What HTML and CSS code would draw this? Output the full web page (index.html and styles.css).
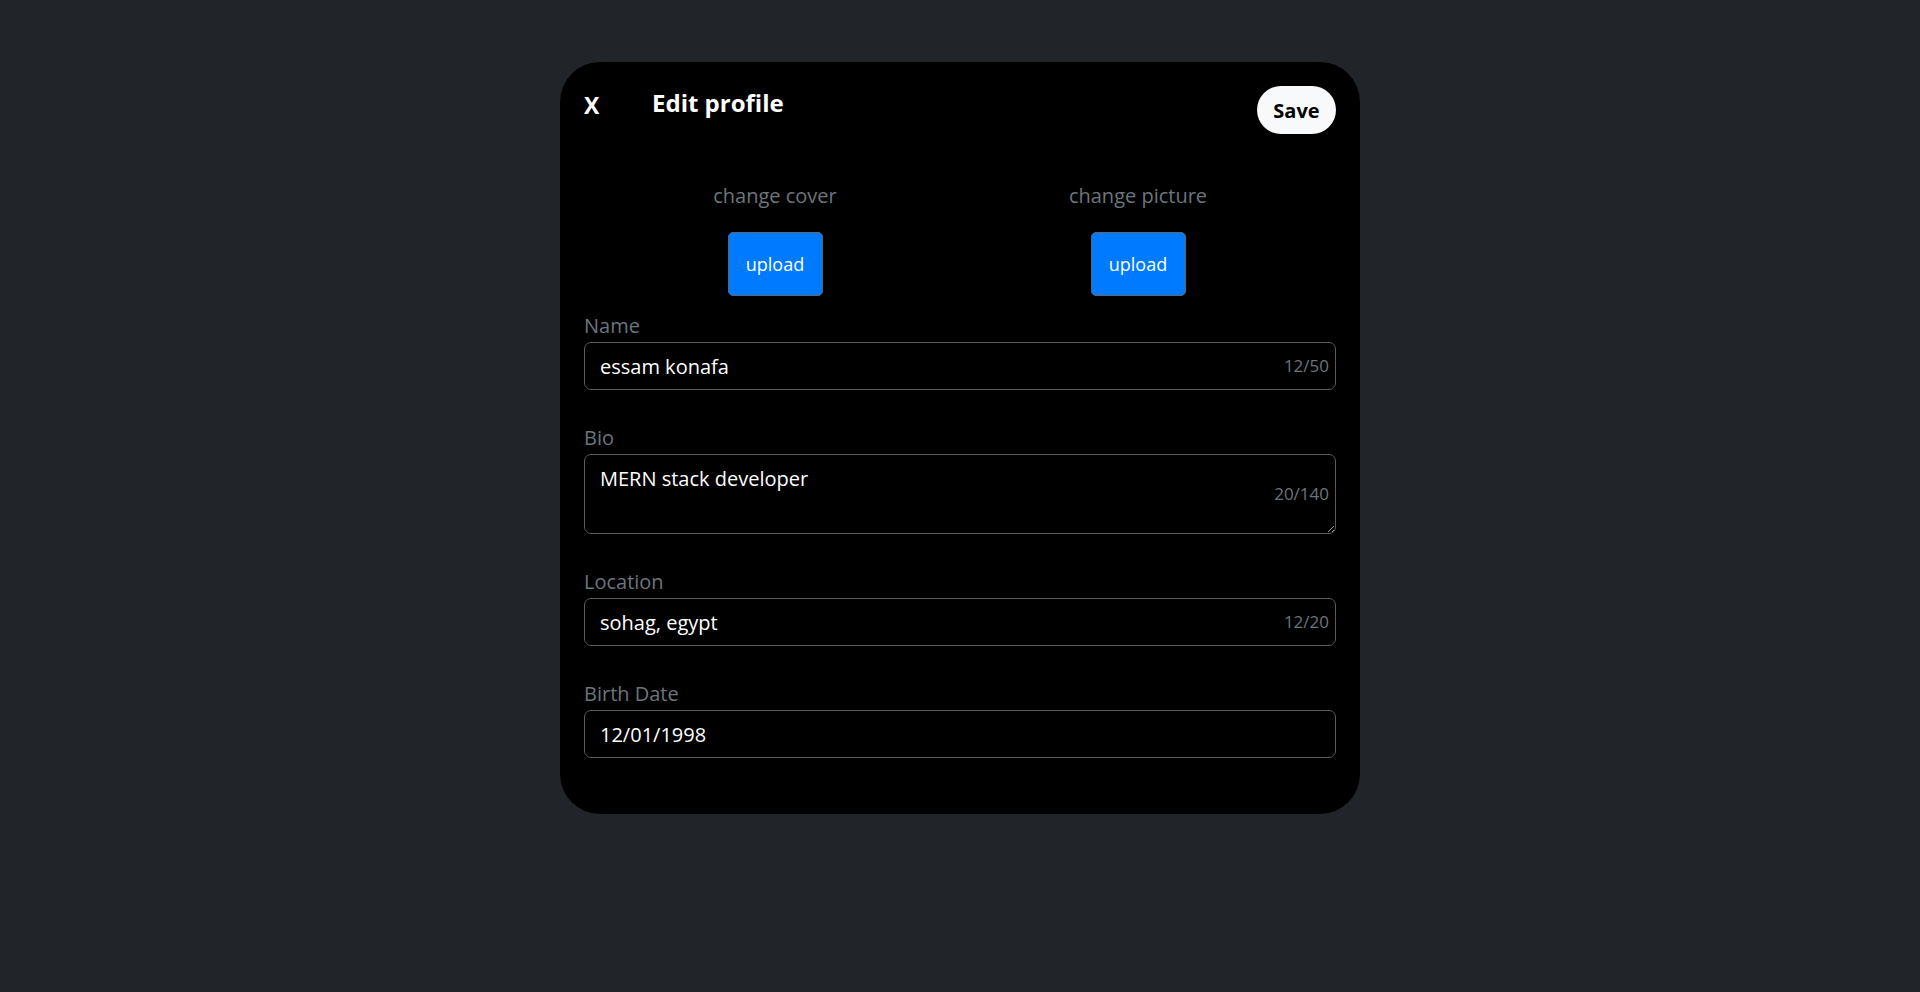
FILE: index.html
```html
<!DOCTYPE html>
<html lang="en">
<head>
<meta charset="utf-8">
<title>Edit profile</title>
<link rel="stylesheet" href="styles.css">
</head>
<body>
<div class="modal">
  <div class="modal-header">
    <button class="close-btn" type="button">X</button>
    <h3 class="title">Edit profile</h3>
    <button class="save-btn" type="button">Save</button>
  </div>
  <div class="uploads">
    <div class="upload-col">
      <p class="upload-label">change cover</p>
      <button class="upload-btn" type="button">upload</button>
    </div>
    <div class="upload-col">
      <p class="upload-label">change picture</p>
      <button class="upload-btn" type="button">upload</button>
    </div>
  </div>
  <form class="fields">
    <div class="field">
      <label class="field-label">Name</label>
      <div class="control-wrap">
        <input class="control" type="text" value="essam konafa">
        <span class="counter">12/50</span>
      </div>
    </div>
    <div class="field">
      <label class="field-label">Bio</label>
      <div class="control-wrap">
        <textarea class="control area">MERN stack developer</textarea>
        <span class="counter">20/140</span>
      </div>
    </div>
    <div class="field">
      <label class="field-label">Location</label>
      <div class="control-wrap">
        <input class="control" type="text" value="sohag, egypt">
        <span class="counter">12/20</span>
      </div>
    </div>
    <div class="field">
      <label class="field-label">Birth Date</label>
      <div class="control-wrap">
        <input class="control" type="text" value="12/01/1998">
      </div>
    </div>
  </form>
</div>
</body>
</html>
```

FILE: styles.css
```css
* {
  box-sizing: border-box;
}

body {
  margin: 0;
  background: #212529;
  font-family: "Open Sans", "Liberation Sans", sans-serif;
  color: #fff;
}

.modal {
  width: 800px;
  margin: 62px auto 0;
  background: #000;
  border-radius: 40px;
  padding: 24px 24px 56px;
}

.modal-header {
  display: flex;
  align-items: flex-start;
  height: 48px;
}

.close-btn {
  background: none;
  border: none;
  padding: 0;
  margin: 3px 0 0;
  width: 68px;
  text-align: left;
  color: #fff;
  font-family: inherit;
  font-weight: 700;
  font-size: 23px;
  line-height: 32px;
  cursor: pointer;
}

.title {
  margin: 1px 0 0;
  font-size: 24px;
  font-weight: 700;
  line-height: 32px;
  flex: 1;
}

.save-btn {
  height: 48px;
  width: 79px;
  border: none;
  border-radius: 24px;
  background: #f8f9fa;
  color: #000;
  font-family: inherit;
  font-weight: 700;
  font-size: 20px;
  padding: 0;
  cursor: pointer;
}

.uploads {
  display: grid;
  grid-template-columns: 150px 150px;
  column-gap: 213px;
  padding-left: 116px;
  margin-top: 47px;
}

.upload-col {
  display: flex;
  flex-direction: column;
  align-items: center;
}

.upload-label {
  margin: 0 0 21px;
  color: #6c757d;
  font-size: 20px;
  line-height: 30px;
  white-space: nowrap;
}

.upload-btn {
  width: 95px;
  height: 64px;
  background: #007bff;
  border: 1px solid #5f6870;
  border-radius: 5px;
  color: #fff;
  font-family: inherit;
  font-size: 18px;
  padding: 0;
  cursor: pointer;
}

.fields {
  margin-top: 15px;
  display: flex;
  flex-direction: column;
  gap: 33px;
}

.field {
  display: flex;
  flex-direction: column;
  gap: 1px;
}

.field-label {
  color: #6c757d;
  font-size: 20px;
  line-height: 30px;
}

.control-wrap {
  position: relative;
}

.control {
  display: block;
  width: 100%;
  height: 48px;
  background: #000;
  border: 1px solid #5a5a5a;
  border-radius: 7px;
  color: #fff;
  font-family: inherit;
  font-size: 20px;
  padding: 0 15px;
  outline: none;
}

.area {
  height: 80px;
  padding: 9px 15px;
  line-height: 30px;
  resize: vertical;
  color-scheme: dark;
}

.counter {
  position: absolute;
  right: 7px;
  top: 50%;
  transform: translateY(-50%);
  color: #6c757d;
  font-size: 17px;
  line-height: 24px;
}
```
